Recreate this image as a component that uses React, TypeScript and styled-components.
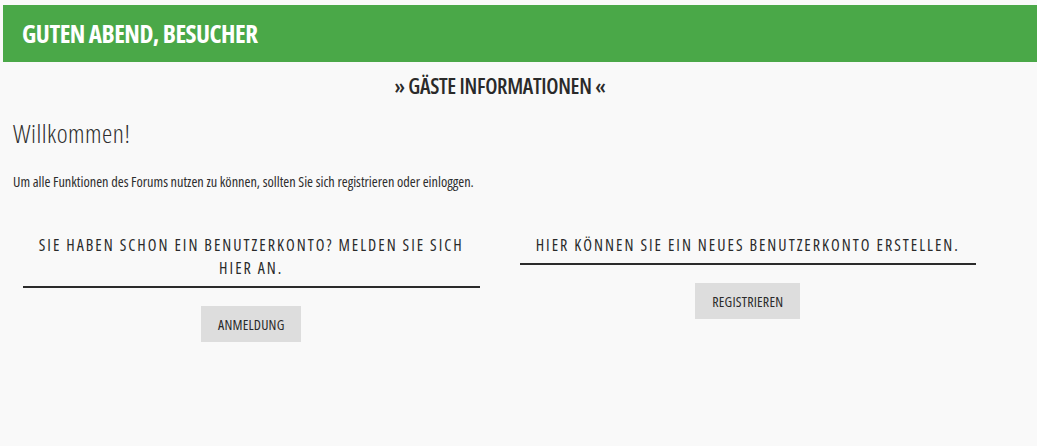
import React from "react";
import styled, { createGlobalStyle } from "styled-components";

const GlobalStyle = createGlobalStyle`
  html, body {
    margin: 0;
    padding: 0;
    background: #f9f9f9;
  }
  body {
    font-family: "Open Sans", "Noto Sans", sans-serif;
    font-stretch: 75%;
    color: #2e2e2e;
  }
`;

const Page = styled.div`
  padding-top: 5px;
`;

const Header = styled.header`
  margin-left: 3px;
  height: 57px;
  background: #4aa848;
  display: flex;
  align-items: center;
  padding-left: 19px;
`;

const HeaderTitle = styled.h1`
  margin: 0;
  font-size: 25px;
  font-weight: 700;
  font-stretch: 75%;
  color: #ffffff;
  letter-spacing: -0.5px;
  line-height: 1;
`;

const SectionTitle = styled.h2`
  width: 1000px;
  margin: 9px 0 0;
  text-align: center;
  font-size: 21.5px;
  font-weight: 600;
  font-stretch: 75%;
  letter-spacing: -0.3px;
  line-height: 30px;
  color: #2a2a2a;
`;

const Content = styled.div`
  padding: 0 13px;
`;

const Welcome = styled.h3`
  margin: 15px 0 0;
  font-size: 26px;
  font-weight: 300;
  font-stretch: 75%;
  letter-spacing: 0.5px;
  line-height: 34px;
  color: #2e2e2e;
`;

const Intro = styled.p`
  margin: 22px 0 0;
  font-size: 14.3px;
  font-weight: 400;
  font-stretch: 75%;
  line-height: 19px;
  color: #2e2e2e;
`;

const Columns = styled.div`
  display: grid;
  grid-template-columns: 1fr 1fr;
  column-gap: 40px;
  width: 953px;
  margin: 43px 0 0 23px;
  align-items: start;
`;

const Column = styled.section`
  display: flex;
  flex-direction: column;
  align-items: center;
`;

const ColumnHeading = styled.h4`
  align-self: stretch;
  margin: 0;
  padding-bottom: 6px;
  border-bottom: 2px solid #2b2b2b;
  text-align: center;
  text-transform: uppercase;
  font-size: 16px;
  font-weight: 400;
  letter-spacing: 2px;
  line-height: 23px;
  color: #2a2a2a;
`;

const ActionButton = styled.button`
  margin-top: 18px;
  height: 36px;
  padding: 0 17px;
  border: none;
  background: #dddddd;
  font-family: inherit;
  font-stretch: 75%;
  font-size: 14px;
  font-weight: 400;
  letter-spacing: 0.2px;
  text-transform: uppercase;
  color: #2a2a2a;
  cursor: pointer;
`;

export default function App() {
  return (
    <>
      <GlobalStyle />
      <Page>
        <Header>
          <HeaderTitle>GUTEN ABEND, BESUCHER</HeaderTitle>
        </Header>
        <SectionTitle>» GÄSTE INFORMATIONEN «</SectionTitle>
        <Content>
          <Welcome>Willkommen!</Welcome>
          <Intro>
            Um alle Funktionen des Forums nutzen zu können, sollten Sie sich
            registrieren oder einloggen.
          </Intro>
        </Content>
        <Columns>
          <Column>
            <ColumnHeading>
              Sie haben schon ein Benutzerkonto? Melden Sie sich hier an.
            </ColumnHeading>
            <ActionButton>Anmeldung</ActionButton>
          </Column>
          <Column>
            <ColumnHeading>
              Hier können Sie ein neues Benutzerkonto erstellen.
            </ColumnHeading>
            <ActionButton>Registrieren</ActionButton>
          </Column>
        </Columns>
      </Page>
    </>
  );
}
